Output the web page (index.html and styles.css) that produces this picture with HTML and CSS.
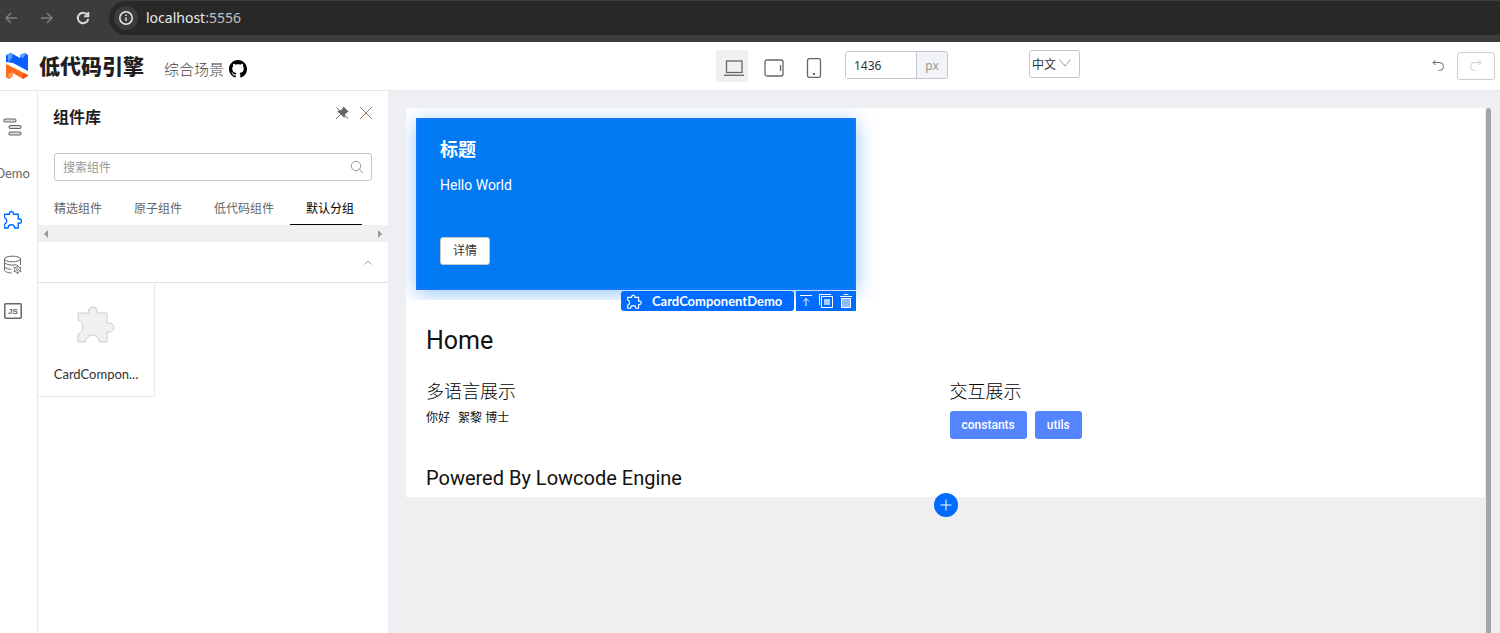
FILE: index.html
```html
<!DOCTYPE html>
<html lang="zh-CN">
<head>
<meta charset="utf-8">
<title>低代码引擎</title>
<link rel="stylesheet" href="styles.css">
</head>
<body>
<svg class="defs" aria-hidden="true">
  <symbol id="puzzle" viewBox="0 0 38 40">
    <path d="M1 9H11.500V6A4.500 4.500 0 0 1 20 6V9H30V19H32.500A4.500 4.500 0 0 1 32.500 28H30V38H22.500A7 7 0 0 0 8.500 38H1V30A7.500 7.500 0 0 0 1 16Z"/>
  </symbol>
</svg>
<div class="browser">
  <button class="nav-btn dim" aria-label="Back"><svg width="14" height="14" viewBox="0 0 14 14"><path d="M13 7H2M7 2L2 7l5 5"/></svg></button>
  <button class="nav-btn dim" aria-label="Forward"><svg width="14" height="14" viewBox="0 0 14 14"><path d="M1 7h11M7 2l5 5-5 5"/></svg></button>
  <button class="nav-btn" aria-label="Reload"><svg width="14" height="14" viewBox="0 0 14 14"><path d="M11.300 3.700A5.300 5.300 0 1 0 12.300 8M12.300 1v4.300H8"/></svg></button>
  <div class="address">
    <button class="info" aria-label="Site information"><svg width="16" height="16" viewBox="0 0 16 16"><circle cx="8" cy="8" r="6.200"/><path d="M8 7.500v3.500M8 4.500v1.500"/></svg></button>
    <span>localhost<span class="port">:5556</span></span>
  </div>
</div>
<header class="topbar">
  <div class="brand">
    <svg width="24" height="28" viewBox="0 0 24 28" aria-hidden="true">
      <path fill="#0a5cff" d="M1 3l5-2 9 5V3l5-2 3 2v16L8 11l-7-1z"/>
      <path fill="#5c9dff" d="M1 3l2 1v6l4-4 1-4-2-1zM15 3l5-2 1 1-3 4-3-1z"/>
      <path fill="#ff6a1c" d="M1 12l22 11-5 4-10-6v3l-4 3-3-2z"/>
      <path fill="#ff9a5e" d="M3 22l5-2v4l-4 3z"/>
      <path fill="#f2500f" d="M18 21l5 2v1l-5 3z"/>
    </svg>
    <strong class="brand-name">低代码引擎</strong>
    <a class="scene" href="#scene">综合场景</a>
    <a class="github" href="#github" aria-label="GitHub"><svg width="18" height="18" viewBox="0 0 16 16"><path d="M8 0C3.580 0 0 3.580 0 8c0 3.540 2.290 6.530 5.470 7.590.4.070.55-.17.55-.38 0-.19-.01-.82-.01-1.490-2.010.37-2.530-.49-2.690-.94-.09-.23-.48-.94-.82-1.130-.28-.15-.68-.52-.01-.53.63-.01 1.080.58 1.230.82.72 1.210 1.870.87 2.330.66.07-.52.28-.87.51-1.070-1.780-.2-3.640-.89-3.640-3.950 0-.87.31-1.590.82-2.150-.08-.2-.36-1.020.08-2.120 0 0 .67-.21 2.200.82.64-.18 1.320-.27 2-.27s1.360.09 2 .27c1.530-1.040 2.200-.82 2.200-.82.44 1.100.16 1.920.08 2.120.51.56.82 1.270.82 2.150 0 3.070-1.870 3.750-3.650 3.950.29.25.54.73.54 1.480 0 1.070-.01 1.930-.01 2.200 0 .21.15.46.55.38A8.010 8.010 0 0 0 16 8c0-4.420-3.580-8-8-8z"/></svg></a>
  </div>
  <div class="tools">
    <div class="devices">
      <button class="device on" aria-label="Laptop"><svg width="20" height="20" viewBox="0 0 20 20"><rect x="2.500" y="3" width="15.500" height="11.500"/><path d="M0 17.300h20"/></svg></button>
      <button class="device" aria-label="Tablet"><svg width="20" height="20" viewBox="0 0 20 20"><rect x="1" y="2" width="18" height="16" rx="2"/><path d="M16.500 7v6"/></svg></button>
      <button class="device" aria-label="Phone"><svg width="20" height="20" viewBox="0 0 20 20"><rect x="3.500" y=".6" width="13" height="18.800" rx="2"/><path d="M9 16h2" stroke-width="2"/></svg></button>
    </div>
    <label class="size"><input type="text" value="1436" aria-label="Canvas width"><span>px</span></label>
    <div class="lang">
      <select aria-label="语言"><option>中文</option></select>
      <svg width="12" height="8" viewBox="0 0 12 8" aria-hidden="true"><path d="M.5 .5L6 7 11.500 .5"/></svg>
    </div>
  </div>
  <div class="history">
    <button class="undo" aria-label="Undo"><svg width="14" height="14" viewBox="0 0 14 14"><path d="M4.500 1L2 3.500 4.500 6M2 3.500h6.500a3.800 3.800 0 0 1 0 8H7.500"/></svg></button>
    <button class="redo" aria-label="Redo" disabled><svg width="14" height="14" viewBox="0 0 14 14"><path d="M9.500 1L12 3.500 9.500 6M12 3.500H5.500a3.800 3.800 0 0 0 0 8H6.500"/></svg></button>
  </div>
</header>
<div class="workspace">
  <nav class="rail">
    <button aria-label="Outline"><svg width="20" height="20" viewBox="0 0 20 20"><g fill="#ddd" stroke-width="1.200"><rect x="1" y="2" width="12" height="3" rx="1.500"/><rect x="6" y="8.500" width="12" height="3" rx="1.500"/><rect x="6" y="15" width="12" height="3" rx="1.500"/></g></svg></button>
    <button class="demo">Demo</button>
    <button class="current" aria-label="组件库"><svg width="18" height="19"><use href="#puzzle"/></svg></button>
    <button aria-label="Data source"><svg width="20" height="20" viewBox="0 0 20 20"><ellipse cx="9.500" cy="4" rx="8" ry="2.800"/><path d="M1.500 4v11c0 1.500 3 2.800 7 3M17.500 4v6M1.500 7.500c1 2 8 3.500 12 2M1.500 11.500c1 2 4 2.800 7 2.800"/><circle cx="14.500" cy="14.500" r="3"/><circle cx="14.500" cy="14.500" r="1"/><path d="M14.500 10v9M10.500 12.200l8 4.600M10.500 16.800l8-4.600" stroke-dasharray="1.500 6"/></svg></button>
    <button aria-label="JS"><svg width="18" height="16" viewBox="0 0 18 16"><rect x=".8" y=".8" width="16.400" height="14.400" rx="1" stroke-width="1.500"/><text x="9" y="11" text-anchor="middle">JS</text></svg></button>
  </nav>
  <aside class="panel">
    <div class="panel-head">
      <h1>组件库</h1>
      <button aria-label="Unpin"><svg width="14" height="14" viewBox="0 0 14 14"><path fill="#666" stroke="none" d="M8.500 .5L13.500 5.500 12 6.500 10 8.500 9.500 12 2 5l3.500-.5 2-2z"/><path stroke="#666" d="M1 13l4.500-4.500M1.500 1.500l11.500 11"/></svg></button>
      <button class="close" aria-label="Close"><svg width="12" height="12" viewBox="0 0 12 12"><path d="M0 0l12 12M12 0L0 12"/></svg></button>
    </div>
    <label class="search">
      <input type="text" placeholder="搜索组件" aria-label="搜索组件">
      <svg width="14" height="14" viewBox="0 0 14 14" aria-hidden="true"><circle cx="6" cy="6" r="4.700"/><path d="M9.300 9.300L13 13"/></svg>
    </label>
    <div class="tabs" role="tablist">
      <button role="tab">精选组件</button><button role="tab">原子组件</button><button role="tab">低代码组件</button><button role="tab" class="active" aria-selected="true">默认分组</button>
    </div>
    <div class="hscroll" aria-hidden="true"><svg width="4" height="8" viewBox="0 0 4 8"><path d="M4 0v8L0 4z"/></svg><svg width="4" height="8" viewBox="0 0 4 8"><path d="M0 0v8l4-4z"/></svg></div>
    <button class="group" aria-label="Collapse group"><svg width="8" height="5" viewBox="0 0 8 5"><path d="M.5 4.500L4 1l3.500 3.500"/></svg></button>
    <div class="items">
      <div class="item">
        <svg width="38" height="40" aria-hidden="true"><use href="#puzzle"/></svg>
        <span>CardCompon...</span>
      </div>
    </div>
  </aside>
  <main class="stage">
    <div class="page">
      <div class="frame">
        <div class="card-area">
          <section class="card">
            <h2>标题</h2>
            <p>Hello World</p>
            <button>详情</button>
          </section>
        </div>
        <div class="actions">
          <span class="chip"><svg width="15" height="15"><use href="#puzzle"/></svg>CardComponentDemo</span>
          <span class="ops">
            <button aria-label="Select parent"><svg width="14" height="14" viewBox="0 0 14 14"><path d="M1 1.500h12M7 12V4.500M4 7.500l3-3 3 3"/></svg></button>
            <button aria-label="Copy"><svg width="14" height="14" viewBox="0 0 14 14"><path d="M.5 11V.5H12M2.500 2.500h11v11h-11z"/><path fill="#a9ccff" stroke="none" d="M5 5h6v6H5z"/></svg></button>
            <button aria-label="Delete"><svg width="14" height="14" viewBox="0 0 14 14"><path fill="#8fbcff" d="M2.500 4.500h9v9h-9z"/><path d="M1 2.500h12M4.500 .5h5"/></svg></button>
          </span>
        </div>
      </div>
      <div class="content">
        <h2 class="home">Home</h2>
        <div class="cols">
          <section>
            <h3>多语言展示</h3>
            <p class="hello"><span>你好</span><span>絮黎 博士</span></p>
          </section>
          <section>
            <h3>交互展示</h3>
            <div class="btns"><button>constants</button><button>utils</button></div>
          </section>
        </div>
        <p class="powered">Powered By Lowcode Engine</p>
      </div>
      <button class="add" aria-label="Add"><svg width="12" height="12" viewBox="0 0 12 12"><path d="M6 .5v11M.5 6h11"/></svg></button>
    </div>
    <div class="vscroll" aria-hidden="true"></div>
  </main>
</div>
</body>
</html>
```
FILE: styles.css
```css
* { box-sizing: border-box; }
body {
  margin: 0;
  height: 100vh;
  display: flex;
  flex-direction: column;
  overflow: hidden;
  font: 12px/18px "Noto Sans", "Noto Sans CJK SC", sans-serif;
  color: #333;
  background: #edeff3;
}
h1, h2, h3, p { margin: 0; font-weight: 400; }
button, input, select { font: inherit; color: inherit; margin: 0; }
button { padding: 0; border: 0; background: none; display: flex; align-items: center; justify-content: center; }
svg { fill: none; stroke: currentColor; flex: none; display: block; }
.defs { position: absolute; width: 0; height: 0; }

.browser { flex: none; height: 42px; display: flex; align-items: flex-start; background: #3c3c3c; padding: 1px 0 0 4px; }
.nav-btn { width: 14px; height: 34px; margin-right: 22px; color: #d8d8d8; }
.nav-btn svg { stroke-width: 2; }
.nav-btn.dim { color: #7c7c7c; }
.nav-btn.dim svg { stroke-width: 1.5; }
.address {
  flex: 1;
  height: 34px;
  margin-left: -3px;
  padding-left: 5px;
  border-radius: 17px 0 0 17px;
  background: #282828;
  display: flex;
  align-items: center;
  gap: 8px;
  color: #e8e8e8;
  font: 14px/20px "Noto Sans", sans-serif;
}
.info { width: 24px; height: 24px; border-radius: 50%; background: #3c3c3c; }
.info svg { stroke-width: 1.5; }
.port { color: #c0c0c0; }

.topbar { flex: none; height: 49px; display: grid; grid-template-columns: 716fr 364fr 420fr; background: #fff; border-bottom: 1px solid #e6e8ec; }
.brand { display: flex; align-items: center; padding-left: 5px; }
.brand > svg { stroke: none; }
.brand-name { margin: 0 0 3px 10px; font: 900 21px/28px "Noto Sans CJK SC", sans-serif; color: #1f1f1f; }
.scene { margin: 6px 5px 0 20px; font: 300 15px/20px "Noto Sans CJK SC", sans-serif; color: #444; text-decoration: none; }
.github { margin-top: 5px; color: #000; }
.github svg { fill: #000; stroke: none; }
.tools { display: flex; align-items: flex-start; padding-top: 8px; }
.devices { display: flex; gap: 8px; }
.device { width: 32px; height: 32px; padding: 4px 0 0 4px; border-radius: 3px; color: #666; }
.device svg { stroke-width: 1.3; }
.device.on { background: #f0f0f0; }
.size { display: flex; width: 103px; height: 28px; margin: 1px 0 0 17px; border: 1px solid #c4c6cf; border-radius: 3px; overflow: hidden; font-size: 12px; }
.size input { flex: 1; min-width: 0; border: 0; outline: 0; padding: 1px 8px 0; }
.size span { width: 31px; border-left: 1px solid #c4c6cf; background: #f2f3f7; color: #999; text-align: center; line-height: 28px; }
.lang { position: relative; width: 51px; height: 28px; margin-left: auto; color: #999; }
.lang select { appearance: none; width: 100%; height: 100%; padding: 1px 2px 0; border: 1px solid #c4c6cf; border-radius: 3px; background: #fff; color: #333; }
.lang svg { position: absolute; right: 9px; top: 9px; pointer-events: none; }
.history { display: flex; justify-content: flex-end; padding: 10px 5px 0 0; gap: 12px; }
.undo { width: 14px; height: 28px; color: #666; }
.redo { width: 38px; height: 28px; border: 1px solid #ccc; border-radius: 3px; color: #ccc; }

.workspace { flex: 1; min-height: 0; display: flex; }
.rail { flex: none; width: 38px; padding: 26px 12px 0 0; border-right: 1px solid #e8e8e8; background: #fff; display: flex; flex-direction: column; align-items: center; gap: 26px; color: #666; overflow: hidden; }
.rail button { height: 20px; }
.rail .demo { font: 13px/20px Lato, sans-serif; }
.rail .current { color: #006cff; }
.rail use { stroke-width: 3; }
.rail text { font: 700 8px "Liberation Sans", sans-serif; fill: #666; stroke: none; }

.panel { flex: none; width: 350px; background: #fff; display: flex; flex-direction: column; }
.panel-head { display: flex; align-items: center; height: 44px; padding: 0 16px 0 15px; color: #666; }
.panel h1 { flex: 1; padding-top: 6px; font: 700 16px/24px "Noto Sans CJK SC", sans-serif; color: #1f1f1f; }
.close { margin-left: 11px; color: #9a7b5c; }
.search { display: flex; align-items: center; height: 28px; margin: 18px 16px 0; padding: 0 7px 0 8px; border: 1px solid #c4c6cf; border-radius: 3px; color: #999; }
.search input { flex: 1; min-width: 0; border: 0; outline: 0; padding: 2px 0 0; background: none; }
.search input::placeholder { color: #999; }
.tabs { display: flex; height: 44px; padding-top: 12px; margin-right: 26px; overflow: hidden; }
.tabs button { flex: none; padding: 0 16px; border-bottom: 1px solid transparent; color: #666; }
.tabs .active { color: #000; border-bottom-color: #000; }
.hscroll { display: flex; align-items: center; justify-content: space-between; height: 17px; padding: 0 6px; background: #f0f0f0; }
.hscroll svg { fill: #999; stroke: none; }
.group { height: 41px; justify-content: flex-end; padding-right: 16px; border-bottom: 1px solid #e0e0e0; color: #999; }
.items { display: flex; flex-wrap: wrap; }
.item { width: 117px; height: 114px; padding: 21px 14px 0; border: 1px solid #e8e8e8; border-width: 0 1px 1px 0; display: flex; flex-direction: column; align-items: center; gap: 21px; font: 13px/18px Lato, sans-serif; }
.item svg { fill: #f0f0f0; stroke: #ccc; }

.stage { flex: 1; min-width: 0; display: flex; padding: 17px 9px 0 18px; }
.page { position: relative; flex: 1; min-width: 0; background: #efefef; }
.vscroll { width: 5px; margin-left: 1px; border-radius: 3px 3px 0 0; background: #a4a6aa; }
.frame { position: relative; }
.card-area { padding: 10px; background: #fff; overflow: hidden; }
.card { width: 440px; height: 172px; padding: 16px 22px; border: 2px solid #1479ff; background: #0079f2; box-shadow: 0 4px 20px rgba(0, 121, 242, .4); color: #fff; display: flex; flex-direction: column; align-items: flex-start; }
.card h2 { font: 700 18px/24px "Noto Sans CJK SC", sans-serif; }
.card p { margin-top: 15px; font: 14px/20px Roboto, sans-serif; }
.card button { width: 50px; height: 28px; margin-top: 42px; border: 1px solid #c4c6cf; border-radius: 3px; background: #fff; color: #333; }
.actions { position: absolute; left: 10px; top: 183px; z-index: 2; width: 440px; display: flex; justify-content: flex-end; gap: 2px; height: 20px; color: #fff; }
.chip { display: flex; align-items: center; gap: 10px; width: 173px; padding-left: 6px; border-radius: 3px; background: #006cff; font: 700 13px/20px Lato, sans-serif; }
.chip use { stroke-width: 3; }
.ops { display: flex; align-items: center; gap: 6px; padding: 0 3px; background: #006cff; }
.content { height: 197px; padding: 21px 20px 0; background: #fff; color: #111; }
.home { font: 25px/40px Roboto, sans-serif; }
.cols { display: grid; grid-template-columns: 1fr 1fr; gap: 8px; margin-top: 16px; }
.cols h3 { font: 300 18px/26px "Noto Sans CJK SC", sans-serif; color: #000; }
.hello { display: flex; gap: 8px; margin-top: 6px; }
.btns { display: flex; gap: 8px; margin-top: 8px; }
.btns button { height: 28px; padding: 0 12px; border-radius: 3px; background: #5584ff; color: #fff; font: 500 12px/28px Roboto, sans-serif; }
.powered { margin-top: 26px; font: 20px/26px Roboto, sans-serif; }
.add { position: absolute; left: 50%; top: 385px; width: 24px; height: 24px; margin-left: -12px; border-radius: 50%; background: #006cff; color: #fff; }
```
